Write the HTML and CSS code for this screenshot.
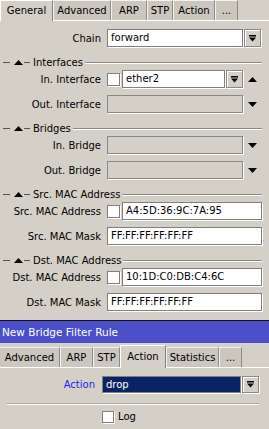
FILE: index.html
```html
<!DOCTYPE html>
<html>
<head>
<meta charset="utf-8">
<link rel="stylesheet" href="styles.css">
</head>
<body>
<div class="win">
  <div class="tabbar tabbar-top">
    <div class="tab active t1-general">General</div>
    <div class="tab t1-adv">Advanced</div>
    <div class="tab t1-arp">ARP</div>
    <div class="tab t1-stp">STP</div>
    <div class="tab t1-action">Action</div>
    <div class="tab t1-more">...</div>
  </div>
  <div class="form">
    <div class="row">
      <div class="lbl">Chain</div>
      <div class="field field-chain">
        <div class="input">forward</div>
        <div class="btn"><svg width="9" height="9" viewBox="0 0 9 9"><rect x="1" y="1" width="7" height="1.5" fill="#000"/><polygon points="1,3.5 8,3.5 4.5,7.5" fill="#000"/></svg></div>
      </div>
    </div>

    <div class="hdr"><span class="dash"></span><svg class="tri" width="9" height="5" viewBox="0 0 9 5"><polygon points="0,5 9,5 4.5,0" fill="#000"/></svg><span class="dash dash2"></span><span class="hdr-text">Interfaces</span><span class="hdr-line"></span></div>
    <div class="row">
      <div class="lbl">In. Interface</div>
      <div class="field">
        <div class="check"></div>
        <div class="input">ether2</div>
        <div class="btn"><svg width="9" height="9" viewBox="0 0 9 9"><rect x="1" y="1" width="7" height="1.5" fill="#000"/><polygon points="1,3.5 8,3.5 4.5,7.5" fill="#000"/></svg></div>
        <div class="arrow"><svg width="9" height="5" viewBox="0 0 9 5"><polygon points="0,5 9,5 4.5,0" fill="#000"/></svg></div>
      </div>
    </div>
    <div class="row">
      <div class="lbl">Out. Interface</div>
      <div class="field">
        <div class="input disabled"></div>
        <div class="arrow"><svg width="9" height="5" viewBox="0 0 9 5"><polygon points="0,0 9,0 4.5,5" fill="#000"/></svg></div>
      </div>
    </div>

    <div class="hdr"><span class="dash"></span><svg class="tri" width="9" height="5" viewBox="0 0 9 5"><polygon points="0,5 9,5 4.5,0" fill="#000"/></svg><span class="dash dash2"></span><span class="hdr-text">Bridges</span><span class="hdr-line"></span></div>
    <div class="row">
      <div class="lbl">In. Bridge</div>
      <div class="field">
        <div class="input disabled"></div>
        <div class="arrow"><svg width="9" height="5" viewBox="0 0 9 5"><polygon points="0,0 9,0 4.5,5" fill="#000"/></svg></div>
      </div>
    </div>
    <div class="row">
      <div class="lbl">Out. Bridge</div>
      <div class="field">
        <div class="input disabled"></div>
        <div class="arrow"><svg width="9" height="5" viewBox="0 0 9 5"><polygon points="0,0 9,0 4.5,5" fill="#000"/></svg></div>
      </div>
    </div>

    <div class="hdr"><span class="dash"></span><svg class="tri" width="9" height="5" viewBox="0 0 9 5"><polygon points="0,5 9,5 4.5,0" fill="#000"/></svg><span class="dash dash2"></span><span class="hdr-text">Src. MAC Address</span><span class="hdr-line"></span></div>
    <div class="row">
      <div class="lbl">Src. MAC Address</div>
      <div class="field">
        <div class="check"></div>
        <div class="input">A4:5D:36:9C:7A:95</div>
      </div>
    </div>
    <div class="row">
      <div class="lbl">Src. MAC Mask</div>
      <div class="field">
        <div class="input">FF:FF:FF:FF:FF:FF</div>
      </div>
    </div>

    <div class="hdr"><span class="dash"></span><svg class="tri" width="9" height="5" viewBox="0 0 9 5"><polygon points="0,5 9,5 4.5,0" fill="#000"/></svg><span class="dash dash2"></span><span class="hdr-text">Dst. MAC Address</span><span class="hdr-line"></span></div>
    <div class="row">
      <div class="lbl">Dst. MAC Address</div>
      <div class="field">
        <div class="check"></div>
        <div class="input">10:1D:C0:DB:C4:6C</div>
      </div>
    </div>
    <div class="row">
      <div class="lbl">Dst. MAC Mask</div>
      <div class="field">
        <div class="input">FF:FF:FF:FF:FF:FF</div>
      </div>
    </div>
  </div>
</div>

<div class="title">New Bridge Filter Rule</div>

<div class="win2">
  <div class="tabbar tabbar-bottom">
    <div class="tab t2-adv">Advanced</div>
    <div class="tab t2-arp">ARP</div>
    <div class="tab t2-stp">STP</div>
    <div class="tab active t2-action">Action</div>
    <div class="tab t2-stats">Statistics</div>
    <div class="tab t2-more">...</div>
  </div>
  <div class="form2">
    <div class="row2">
      <div class="lbl2">Action</div>
      <div class="field2">
        <div class="input selected">drop</div>
        <div class="btn"><svg width="9" height="9" viewBox="0 0 9 9"><rect x="1" y="1" width="7" height="1.5" fill="#000"/><polygon points="1,3.5 8,3.5 4.5,7.5" fill="#000"/></svg></div>
      </div>
    </div>
    <div class="sep"></div>
    <div class="logrow">
      <div class="check check-log"></div>
      <span class="log-text">Log</span>
    </div>
  </div>
</div>
</body>
</html>
```

FILE: styles.css
```css
* { box-sizing: border-box; }

html, body {
  margin: 0;
  padding: 0;
}

body {
  width: 269px;
  height: 429px;
  overflow: hidden;
  background: #d4d0c8;
  font-family: "DejaVu Sans", sans-serif;
  font-size: 10px;
  color: #000;
}

/* ---------- tabs ---------- */
.tabbar {
  display: flex;
  align-items: flex-start;
  border-bottom: 1px solid #fff;
}

.tabbar-top {
  height: 21px;
}

.tabbar-bottom {
  height: 25px;
  padding-top: 4px;
}

.tab {
  height: 20px;
  line-height: 19px;
  text-align: center;
  white-space: nowrap;
  background: #cbc7bf;
  border-top: 1px solid #f4f3f0;
  border-left: 1px solid #f4f3f0;
  border-right: 1px solid #8e8b85;
}

.tab.active {
  position: relative;
  height: 21px;
  background: #d4d0c8;
  border-top: 1px solid #fff;
  border-left: 1px solid #fff;
  border-right: 1px solid #808080;
}

.tabbar-bottom .tab.active {
  height: 23px;
  margin-top: -2px;
  line-height: 21px;
}

.t1-general { width: 53px; border-left: none; }
.t1-adv { width: 58px; }
.t1-arp { width: 36px; }
.t1-stp { width: 26px; }
.t1-action { width: 42px; }
.t1-more { width: 23px; }

.t2-adv { width: 60px; border-left: none; }
.t2-arp { width: 33px; }
.t2-stp { width: 27px; }
.t2-action { width: 46px; }
.t2-stats { width: 53px; }
.t2-more { width: 23px; }

/* ---------- first form ---------- */
.win {
  height: 321px;
  border-bottom: 1px solid #111;
}

.form {
  padding-top: 8px;
  display: flex;
  flex-direction: column;
}

.row {
  display: flex;
  align-items: center;
  height: 18px;
  margin-bottom: 7px;
}

.lbl {
  width: 107px;
  padding-right: 6px;
  text-align: right;
  white-space: nowrap;
}

.field {
  display: flex;
  align-items: stretch;
  width: 155px;
  height: 18px;
}

.field-chain {
  padding-right: 1px;
}

.input {
  flex: 1;
  height: 18px;
  line-height: 16px;
  padding-left: 3px;
  background: #fff;
  border: 1px solid #7f7f7f;
  box-shadow: 1px 1px 0 #fff;
  white-space: nowrap;
  overflow: hidden;
}

.input.disabled {
  background: #d4d0c8;
  border-color: #8a8884;
}

.btn {
  width: 17px;
  height: 18px;
  margin-left: 1px;
  display: flex;
  align-items: center;
  justify-content: center;
  background: #d4d0c8;
  border: 1px solid #8a8884;
  box-shadow: inset 1px 1px 0 #fff, 1px 1px 0 #fff;
}

.check {
  width: 13px;
  height: 13px;
  align-self: center;
  margin-right: 2px;
  background: #fff;
  border: 1px solid #7f7f7f;
  box-shadow: 1px 1px 0 #fff;
}

.arrow {
  width: 19px;
  display: flex;
  align-items: center;
  justify-content: center;
}

/* section headers */
.hdr {
  display: flex;
  align-items: center;
  height: 16px;
  padding-left: 3px;
  padding-right: 7px;
}

.dash {
  width: 7px;
  height: 0;
  border-top: 1px solid #555;
  margin-right: 4px;
}

.dash2 {
  width: 6px;
  margin-left: 1px;
  margin-right: 0;
}

.tri {
  display: block;
}

.hdr-text {
  margin-left: 3px;
  white-space: nowrap;
}

.hdr-line {
  flex: 1;
  height: 0;
  margin-left: 2px;
  margin-top: 1px;
  border-top: 1px solid #8a8884;
  border-bottom: 1px solid #fff;
}

/* ---------- title bar ---------- */
.title {
  height: 22px;
  line-height: 22px;
  padding-left: 2px;
  background: #4b4fc8;
  color: #fff;
  font-size: 10.5px;
  white-space: nowrap;
}

/* ---------- second form ---------- */
.form2 {
  padding-top: 8px;
}

.row2 {
  display: flex;
  align-items: center;
  height: 17px;
}

.lbl2 {
  width: 102px;
  padding-right: 7px;
  text-align: right;
  color: #1c1cf0;
}

.field2 {
  display: flex;
  width: 157px;
  height: 17px;
}

.input.selected {
  height: 17px;
  line-height: 15px;
  background: #0a2463;
  color: #fff;
  border-color: #7f7f7f;
}

.field2 .btn {
  height: 17px;
}

.sep {
  margin: 10px 10px 0 7px;
  height: 0;
  border-top: 1px solid #a9a6a0;
  border-bottom: 1px solid #fff;
}

.logrow {
  display: flex;
  align-items: center;
  padding-left: 102px;
  margin-top: 5px;
  height: 13px;
}

.check-log {
  width: 12px;
  height: 12px;
  margin-right: 4px;
}

.log-text {
  line-height: 13px;
}
```
